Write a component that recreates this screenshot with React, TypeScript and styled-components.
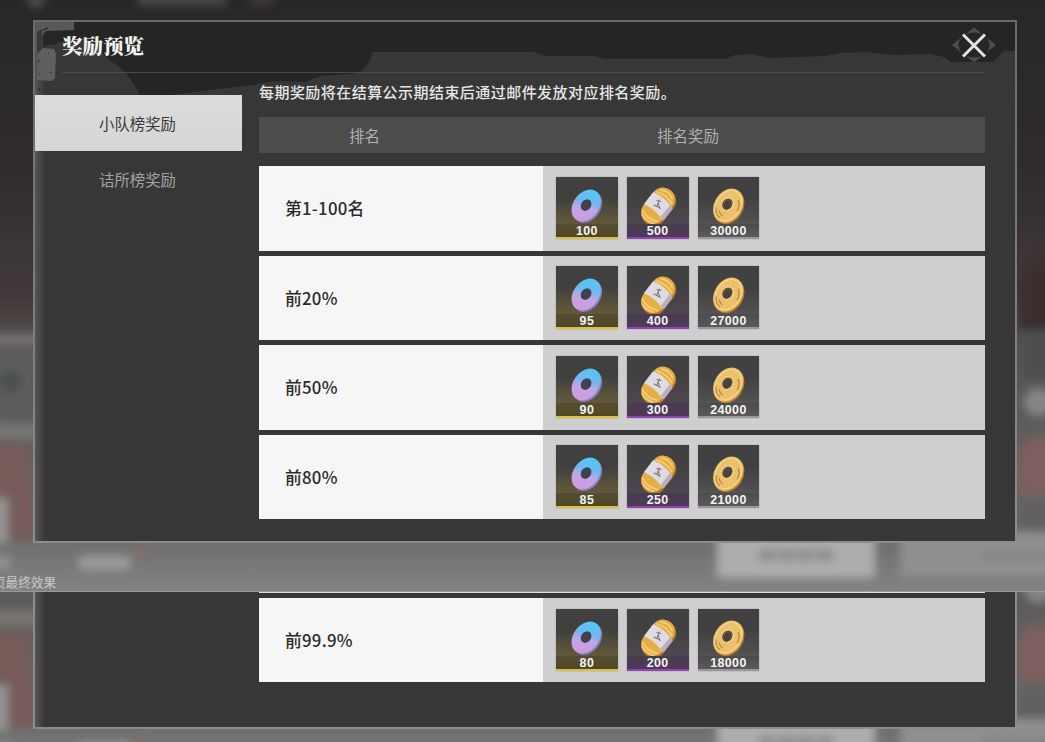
import React from "react";
import styled, { createGlobalStyle } from "styled-components";

const sans = `"Noto Sans CJK SC", "Noto Sans", sans-serif`;

const GlobalStyle = createGlobalStyle`
  * { box-sizing: border-box; }
  body { margin: 0; background: #333; font-family: ${sans}; overflow: hidden; }
`;

const Page = styled.main`
  display: flex;
  flex-direction: column;
  width: 1045px;
  height: 742px;
  overflow: hidden;
`;

const Scene = styled.section<{ $height: number; $top: number }>`
  position: relative;
  flex: none;
  height: ${(p) => p.$height}px;
  padding: ${(p) => p.$top}px 28px 0 33px;
  overflow: hidden;
`;

const Backdrop = styled.svg`
  position: absolute;
  inset: 0;
`;

const Panel = styled.div<{ $height: number; $open?: boolean }>`
  position: relative;
  width: 984px;
  height: ${(p) => p.$height}px;
  border: 2px solid #777576;
  border-image: linear-gradient(#6b696a, #8d8d8b) 1;
  ${(p) => p.$open && "border-top: 0; border-image: none; border-color: #8c8c8a;"}
  background: linear-gradient(90deg, #565455 0, #484747 5px, #3a3939 9px, #373737 11px);
`;

const Brush = styled.svg`
  position: absolute;
  top: 0;
  left: 0;
`;

const Header = styled.header`
  position: relative;
  display: flex;
  justify-content: space-between;
  align-items: flex-start;
  height: 51px;
  margin: 0 30px 0 27px;
  border-bottom: 1px solid #4a4a4a;
`;

const Title = styled.h1`
  margin: 8px 0 0;
  font: 900 20.5px/30px "Noto Serif CJK SC", "Noto Sans CJK SC", serif;
  color: #f3f3f3;
`;

const Close = styled.button`
  width: 46px;
  height: 38px;
  margin: 4px -12px 0 0;
  padding: 0;
  border: 0;
  background: none;
`;

const Body = styled.div`
  position: relative;
  display: flex;
  gap: 17px;
`;

const Tabs = styled.nav`
  display: flex;
  flex-direction: column;
  width: 207px;
  padding-top: 22px;
`;

const Tab = styled.button<{ $active?: boolean }>`
  height: 56px;
  padding: 0 2px 0 0;
  border: 0;
  font: 400 15.4px/57px ${sans};
  color: ${(p) => (p.$active ? "#3c393b" : "#a3a3a3")};
  background: ${(p) => (p.$active ? "linear-gradient(#dddcdd, #d7d5d6)" : "none")};
`;

const Content = styled.div`
  width: 726px;
`;

const Notice = styled.p`
  margin: 7px 0 13px;
  font: 500 15px/24px ${sans};
  letter-spacing: 0.45px;
  color: #e6e6e6;
  white-space: nowrap;
`;

const TableHead = styled.div`
  display: flex;
  height: 36px;
  margin-bottom: 13.3px;
  background: #4d4c4d;
  font: 400 15.5px/37px ${sans};
  color: #b0b0b0;
`;

const HeadCell = styled.div<{ $width: number; $indent: number }>`
  width: ${(p) => p.$width}px;
  padding-left: ${(p) => p.$indent}px;
`;

const Rows = styled.div<{ $single?: boolean }>`
  display: flex;
  flex-direction: column;
  gap: 5.1px;
  ${(p) => p.$single && "width: 726px; margin-left: 224px;"}
`;

const Row = styled.div`
  display: flex;
  height: 84.4px;
`;

const Rank = styled.div`
  width: 284px;
  padding-left: 26px;
  font: 500 16.8px/84px ${sans};
  letter-spacing: 0.25px;
  color: #2c2b2c;
  background: #f5f6f5;
`;

const Rewards = styled.div`
  display: flex;
  flex: 1;
  gap: 9px;
  padding: 10.5px 0 0 13px;
  background: #d0cfd0;
`;

type Kind = "ring" | "roll" | "coin";

const tones: Record<Kind, { glow: string; line: string }> = {
  ring: { glow: "#41403e 35%, #62583a 76%, #5b5027", line: "#ddc13c" },
  roll: { glow: "#424142 35%, #4c464f 72%, #5d3b6a", line: "#9344b4" },
  coin: { glow: "#414141 35%, #4e4e4e 70%, #676768", line: "#98979a" },
};

const Tile = styled.div<{ $kind: Kind }>`
  display: flex;
  flex-direction: column;
  width: 61.8px;
  height: 62.5px;
  background: linear-gradient(#424142, ${(p) => tones[p.$kind].glow});
  border-bottom: 2px solid ${(p) => tones[p.$kind].line};
  box-shadow: 0 0 1px #7d7b7d;
`;

const Count = styled.span`
  height: 13px;
  margin-top: auto;
  font: 700 12.4px/14px "Liberation Sans", Arial, sans-serif;
  letter-spacing: 0.4px;
  text-align: center;
  color: #f5f4f3;
  background: rgba(40, 38, 35, 0.2);
`;

const Caption = styled.span`
  position: absolute;
  left: -7px;
  bottom: 0;
  font: 400 12.6px/18px ${sans};
  color: #c9c9c9;
  white-space: nowrap;
`;

const Divider = styled.hr`
  flex: none;
  height: 1px;
  margin: 0;
  border: 0;
  background: #9a9a99;
`;

const PreviousEdge = styled.div`
  width: 726px;
  height: 1px;
  margin: 0 0 5px 224px;
  background: #dedede;
`;

function RewardIcon({ kind }: { kind: Kind }) {
  if (kind === "ring")
    return (
      <svg width="61.8" height="48" viewBox="0 0 62 48">
        <defs>
          <linearGradient id="ringFill" x1=".35" y1="0" x2=".65" y2="1">
            <stop offset="0" stopColor="#4cc9f6" />
            <stop offset=".38" stopColor="#70b8ef" />
            <stop offset=".58" stopColor="#bda7e6" />
            <stop offset="1" stopColor="#d797d9" />
          </linearGradient>
        </defs>
        <g transform="rotate(36 30.5 29)">
          <ellipse cx="32.2" cy="29.4" rx="13" ry="17.6" fill="#7f7fc4" />
          <ellipse cx="30.2" cy="29" rx="13" ry="17.6" fill="url(#ringFill)" />
          <ellipse cx="29.8" cy="28.6" rx="5" ry="6.2" fill="#38436c" />
          <ellipse cx="30.5" cy="29.2" rx="3.8" ry="5" fill="#434144" />
        </g>
      </svg>
    );
  if (kind === "roll")
    return (
      <svg width="61.8" height="48" viewBox="0 0 62 48">
        <g transform="rotate(38 31 30)">
          <rect x="20" y="9.5" width="24.5" height="41" rx="12" fill="#b7772d" />
          <rect x="18.5" y="9" width="24" height="40.5" rx="12" fill="#e5ae47" />
          <path d="M23 15q7-5 15 0M20.5 19q10-4 20 0M20 42q9 5 20 0M23 46q7 3 15 0" fill="none" stroke="#f7d275" strokeWidth="1.5" />
          <path d="M18.2 21.5q12-4 24.6 1v15q-12-4-24.6-1z" fill="#dedbe2" />
          <path d="M39.5 21.4l4.5 1.2v14.6l-4.5-1z" fill="#b9aec4" />
          <g transform="rotate(-16 30 29)">
            <path d="M27 25l5-1M29.5 23v7M26 30l8 1M30 27l3 4" stroke="#77727b" strokeWidth="1" />
          </g>
        </g>
      </svg>
    );
  return (
    <svg width="61.8" height="48" viewBox="0 0 62 48">
      <g transform="rotate(32 30.5 29)">
        <ellipse cx="32" cy="29.8" rx="14" ry="18.4" fill="#b57a37" />
        <ellipse cx="30.3" cy="29" rx="14" ry="18.4" fill="#ebc16c" />
        <ellipse cx="30.3" cy="29" rx="12.3" ry="16.2" fill="none" stroke="#f6d78c" />
        <path d="M21 37q3 7 9 7M25 38q3 3 6 3M36 19q5 4 5 10" fill="none" stroke="#b77d36" strokeWidth="1.1" />
        <ellipse cx="29" cy="28" rx="6" ry="7.2" fill="#f2d598" />
        <ellipse cx="28.8" cy="28.2" rx="4.9" ry="6.1" fill="#70502f" />
        <ellipse cx="29.3" cy="28.7" rx="3.7" ry="4.8" fill="#474243" />
      </g>
    </svg>
  );
}

function RewardRow({ rank, counts }: { rank: string; counts: number[] }) {
  const kinds: Kind[] = ["ring", "roll", "coin"];
  return (
    <Row>
      <Rank>{rank}</Rank>
      <Rewards>
        {kinds.map((kind, i) => (
          <Tile key={kind} $kind={kind}>
            <RewardIcon kind={kind} />
            <Count>{counts[i]}</Count>
          </Tile>
        ))}
      </Rewards>
    </Row>
  );
}

/* Out-of-focus game screen behind the dialog. */
function BlurredScene({ id, shift = 0, height }: { id: string; shift?: number; height: number }) {
  return (
    <Backdrop width="1045" height={height} viewBox={`0 ${shift} 1045 ${height}`}>
      <defs>
        <linearGradient id={`${id}-sky`} gradientUnits="userSpaceOnUse" x1="0" y1="0" x2="0" y2="591">
          <stop offset="0" stopColor="#282626" />
          <stop offset=".28" stopColor="#302d2c" />
          <stop offset=".5" stopColor="#413939" />
          <stop offset=".6" stopColor="#565452" />
          <stop offset=".9" stopColor="#6b6a69" />
          <stop offset="1" stopColor="#838383" />
        </linearGradient>
        <filter id={`${id}-soft`} x="-30%" y="-30%" width="160%" height="160%">
          <feGaussianBlur stdDeviation="4" />
        </filter>
      </defs>
      <rect width="1045" height="600" fill={`url(#${id}-sky)`} />
      <g filter={`url(#${id}-soft)`}>
        <path d="M24-4h24l-12 14z" fill="#565455" />
        <rect x="138" y="-8" width="88" height="14" fill="#494647" />
        <rect x="250" y="-8" width="25" height="14" fill="#3c393a" />
        <rect x="-8" y="333" width="50" height="12" fill="#75706f" />
        <rect x="-8" y="348" width="50" height="74" fill="#5d5c5c" />
        <circle cx="10" cy="382" r="11" fill="#4c5151" />
        <rect x="-8" y="423" width="50" height="17" fill="#777472" />
        <path d="M-8 446h38l5 94H-8z" fill="#775b5a" />
        <rect x="-8" y="498" width="16" height="46" fill="#939391" />
        <rect x="-8" y="556" width="18" height="13" fill="#939191" />
        <rect x="79" y="556" width="51" height="14" fill="#9b9b9a" />
        <path d="M136 558l13-18" stroke="#946a69" strokeWidth="3" />
        <path d="M1020 280l35-40v90h-35z" fill="#3a2d2d" />
        <rect x="1022" y="330" width="40" height="50" fill="#4e504f" />
        <circle cx="1038" cy="402" r="14" fill="#858585" />
        <path d="M1018 450l12-12h28v56h-40z" fill="#7d5f5e" />
        <rect x="1018" y="500" width="40" height="30" fill="#606060" />
      </g>
      <g filter={`url(#${id}-soft)`}>
        <rect x="717" y="530" width="158" height="48" fill="#adadac" />
        <path d="M759 555h74" stroke="#8d908f" strokeWidth="13" strokeDasharray="17 2" />
        <rect x="900" y="532" width="160" height="45" fill="#8f8f8e" />
        <path d="M982 555h70" stroke="#7d807f" strokeWidth="7" strokeDasharray="15 3" />
      </g>
    </Backdrop>
  );
}

const rows = [
  { rank: "第1-100名", counts: [100, 500, 30000] },
  { rank: "前20%", counts: [95, 400, 27000] },
  { rank: "前50%", counts: [90, 300, 24000] },
  { rank: "前80%", counts: [85, 250, 21000] },
];

export default function App() {
  return (
    <Page>
      <GlobalStyle />
      <Scene $height={591} $top={20}>
        <BlurredScene id="upper" height={591} />
        <Panel $height={522.5}>
          <Brush width="980" height="78" viewBox="0 0 980 78">
            <path d="M20 0H980V29H969L958 40H916L909 35 895 32 860 33 832 30 805 31 790 34 735 36 715 32 700 33 690 37 570 37 560 34 510 34 500 30H337Q334 49 318 52L286 54 270 60 238 59 218 63 174 68 135 73H105Q91 46 75 39L62 25 52 16 23 20Z" fill="#252525" />
            <path d="M8 8H36L24 14 22 22 8 24Z" fill="#262626" />
            <path d="M0 0H39V8L11 9 7 14 7 30 0 31Z" fill="#5a595a" />
            <path d="M2 10l5-3v22l-5 3z" fill="#39393a" />
            <path d="M8 26L19 27 21 32 20 56 17 59 2 58V32Z" fill="#5e5f60" />
            <path d="M8 8l5-2M3 40l1-2M13 31h1M4 66l1 3M15 50l1 1M4 52h1" stroke="#303031" strokeWidth="1.6" />
          </Brush>
          <Header>
            <Title>奖励预览</Title>
            <Close aria-label="关闭">
              <svg width="46" height="38" viewBox="0 0 46 38">
                <path d="M23 1.5L45 19 23 36.5 1 19Z" fill="#4e4d4e" />
                <ellipse cx="23" cy="19" rx="15.5" ry="12.5" fill="#272627" />
                <path d="M12 8.5L34 30.5M34 8.5L12 30.5" stroke="#272627" strokeWidth="6" />
                <path d="M12 8.5L34 30.5M34 8.5L12 30.5" stroke="#e4e3e3" strokeWidth="3" />
              </svg>
            </Close>
          </Header>
          <Body>
            <Tabs>
              <Tab $active>小队榜奖励</Tab>
              <Tab>诘所榜奖励</Tab>
            </Tabs>
            <Content>
              <Notice>每期奖励将在结算公示期结束后通过邮件发放对应排名奖励。</Notice>
              <TableHead>
                <HeadCell $width={284} $indent={90}>排名</HeadCell>
                <HeadCell $width={442} $indent={114}>排名奖励</HeadCell>
              </TableHead>
              <Rows>
                {rows.map((row) => (
                  <RewardRow key={row.rank} {...row} />
                ))}
              </Rows>
            </Content>
          </Body>
        </Panel>
        <Caption>页最终效果</Caption>
      </Scene>
      <Divider />
      <Scene $height={150} $top={0}>
        <BlurredScene id="lower" shift={405} height={150} />
        <Panel $height={136.5} $open>
          <PreviousEdge />
          <Rows $single>
            <RewardRow rank="前99.9%" counts={[80, 200, 18000]} />
          </Rows>
        </Panel>
      </Scene>
    </Page>
  );
}
